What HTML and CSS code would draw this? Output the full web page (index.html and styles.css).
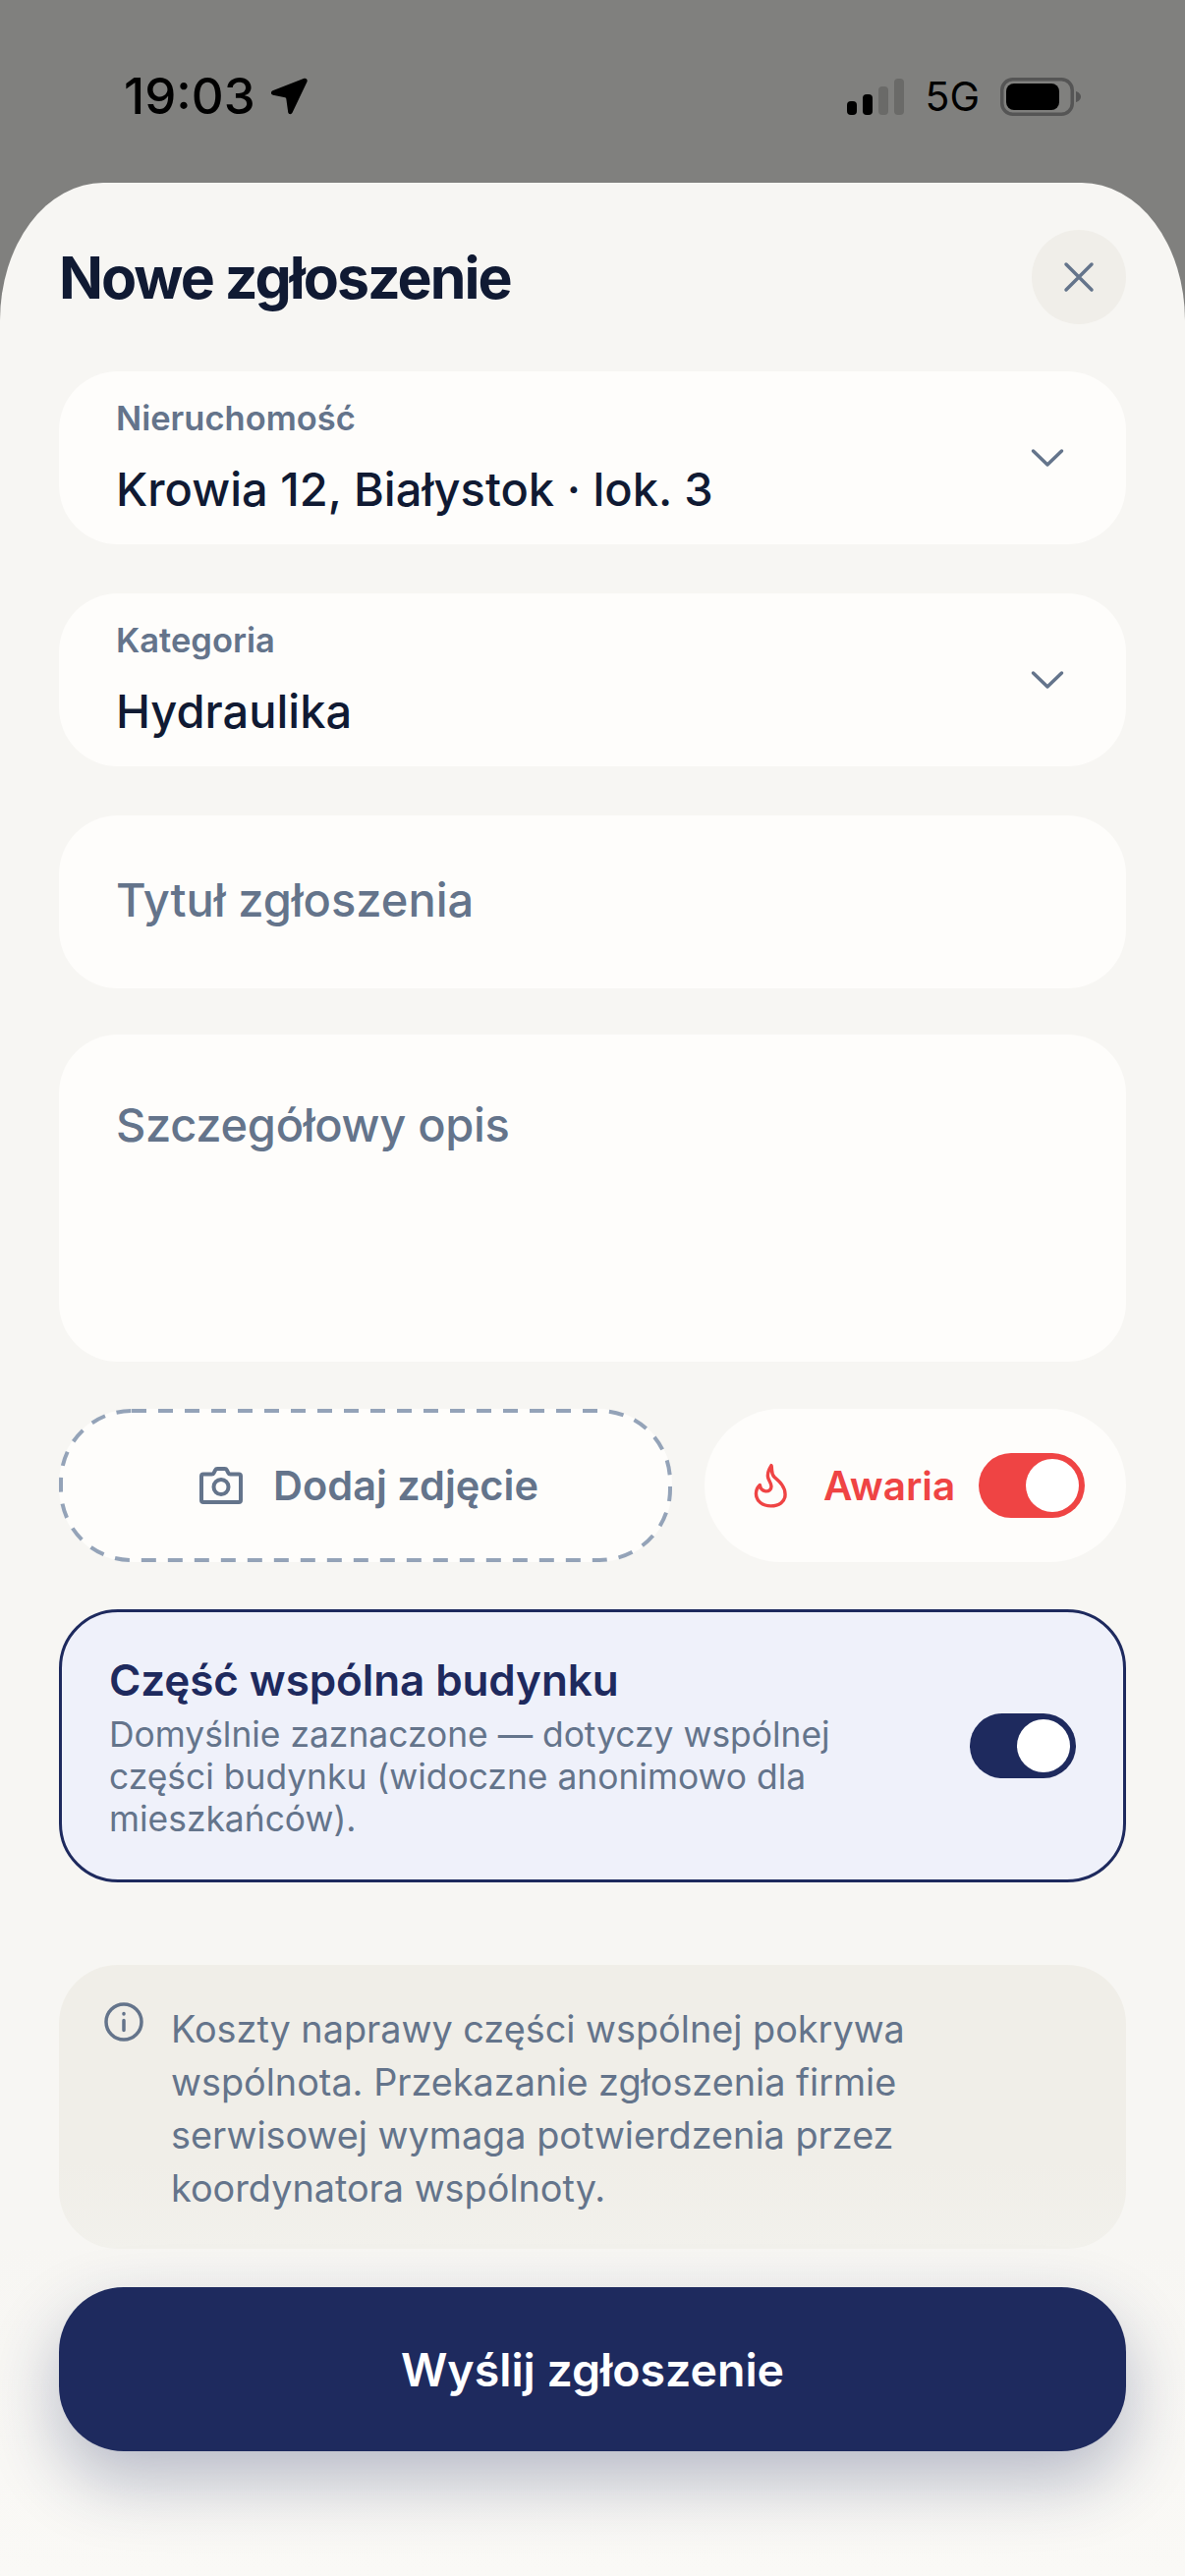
FILE: index.html
```html
<!DOCTYPE html>
<html lang="pl">
<head>
<meta charset="utf-8">
<title>Nowe zgłoszenie</title>
<link rel="stylesheet" href="styles.css">
</head>
<body>
<div class="screen">
  <div class="statusbar">
    <div class="status-left">
      <span class="time">19:03</span>
      <svg class="loc" viewBox="0 0 40 40"><path d="M35.500 1.800 3.500 14.300c-2.200.9-2 3.900.3 4.400l12.400 2.600c.6.1 1 .6 1.100 1.200l1.900 13.700c.3 2.300 3.400 2.700 4.300.6L38.600 5c.7-2-1.200-3.900-3.100-3.200z"/></svg>
    </div>
    <div class="status-right">
      <svg class="signal" viewBox="0 0 58 37"><rect x="0" y="23" width="10" height="14" rx="4"/><rect x="16" y="16" width="10" height="21" rx="4"/><rect class="dim" x="32" y="8" width="10" height="29" rx="4"/><rect class="dim" x="48" y="0" width="10" height="37" rx="4"/></svg>
      <span class="net">5G</span>
      <svg class="battery" viewBox="0 0 82 39"><rect class="batt-frame" x="1.750" y="1.750" width="71.500" height="35.500" rx="11"/><rect x="6" y="6" width="54" height="27" rx="8"/><path class="dim" d="M77 14c2.500.6 5 2.700 5 5.500s-2.500 4.900-5 5.500z"/></svg>
    </div>
  </div>

  <main class="sheet">
    <header class="sheet-head">
      <h1 class="title">Nowe zgłoszenie</h1>
      <button class="close" type="button" aria-label="Zamknij">
        <svg class="close-icon" viewBox="0 0 32 32"><path d="M3 3l26 26M29 3 3 29"/></svg>
      </button>
    </header>

    <div class="field field-select">
      <div class="field-body">
        <div class="field-label">Nieruchomość</div>
        <div class="field-value">Krowia 12, Białystok · lok. 3</div>
      </div>
      <svg class="chevron" viewBox="0 0 34 20"><path d="M2.500 3 17 17 31.500 3"/></svg>
    </div>

    <div class="field field-select">
      <div class="field-body">
        <div class="field-label">Kategoria</div>
        <div class="field-value">Hydraulika</div>
      </div>
      <svg class="chevron" viewBox="0 0 34 20"><path d="M2.500 3 17 17 31.500 3"/></svg>
    </div>

    <div class="field field-input">Tytuł zgłoszenia</div>
    <div class="field field-area">Szczegółowy opis</div>

    <div class="action-row">
      <div class="photo">
        <svg class="photo-outline" viewBox="0 0 624 156"><rect x="2" y="2" width="620" height="152" rx="72"/></svg>
        <svg class="camera" viewBox="0 0 44 38"><path d="M4 7.500h8.500c1 0 1.800-.5 2.200-1.400l1.400-2.800c.4-.8 1.200-1.300 2.100-1.300h7.600c.9 0 1.700.5 2.100 1.300l1.400 2.800c.4.900 1.200 1.400 2.200 1.400H40c1.100 0 2 .9 2 2V34c0 1.100-.9 2-2 2H4c-1.100 0-2-.9-2-2V9.500c0-1.100.9-2 2-2z"/><circle cx="22" cy="20.500" r="7.500"/></svg>
        <span class="photo-text">Dodaj zdjęcie</span>
      </div>
      <div class="alarm">
        <svg class="flame" viewBox="0 0 36 46"><path d="M18.500 2c1.500 5-1 8.500 3.500 12.500 5 4.500 11 9.500 11 18 0 7.500-6.500 12-15 12s-15.500-5-15.500-13c0-3.500 1.500-6.500 4-9 .5 3.500 2.500 6 6 6.500 3.500.5 6-2 6-5 0-3.500-2.500-5.500-3.500-9.500-.7-3.500 1-8.500 3.500-12.500z"/></svg>
        <span class="alarm-text">Awaria</span>
        <span class="toggle toggle-red"><span class="knob"></span></span>
      </div>
    </div>

    <section class="common">
      <div class="common-text">
        <div class="common-title">Część wspólna budynku</div>
        <p class="common-desc">Domyślnie zaznaczone — dotyczy wspólnej części budynku (widoczne anonimowo dla mieszkańców).</p>
      </div>
      <span class="toggle toggle-navy"><span class="knob"></span></span>
    </section>

    <aside class="note">
      <svg class="info" viewBox="0 0 40 40"><circle cx="20" cy="20" r="18"/><path d="M20 18.500v10M20 11.500v.6"/></svg>
      <p class="note-text">Koszty naprawy części wspólnej pokrywa wspólnota. Przekazanie zgłoszenia firmie serwisowej wymaga potwierdzenia przez koordynatora wspólnoty.</p>
    </aside>

    <button class="submit" type="button">Wyślij zgłoszenie</button>
  </main>
</div>
</body>
</html>
```

FILE: styles.css
```css
* { box-sizing: border-box; }
html, body { margin: 0; padding: 0; }
body {
  width: 1206px;
  height: 2622px;
  overflow: hidden;
  background: #80807e;
  font-family: Inter, "Liberation Sans", sans-serif;
}
.screen { height: 2622px; display: flex; flex-direction: column; }

.statusbar {
  height: 186px;
  flex: none;
  padding: 71px 106px 0 126px;
  display: flex;
  justify-content: space-between;
  align-items: flex-start;
  color: #000;
}
.status-left { display: flex; align-items: center; gap: 14px; height: 54px; }
.time { font-size: 51px; font-weight: 500; line-height: 54px; }
.loc { width: 40px; height: 40px; fill: #000; }
.status-right { display: flex; align-items: center; height: 54px; }
.signal { width: 58px; height: 37px; fill: #000; margin-right: 21px; }
.signal .dim { fill: #6a6a68; }
.net { font-size: 41px; font-weight: 400; line-height: 54px; margin-right: 21px; }
.battery { width: 82px; height: 39px; fill: #000; }
.batt-frame { fill: none; stroke: #555; stroke-width: 3.5; }
.battery .dim { fill: #555; }

.sheet {
  flex: 1;
  background: linear-gradient(#f7f6f3 0, #f7f6f3 2100px, #faf9f6 100%);
  border-radius: 105px 105px 0 0 / 140px 140px 0 0;
  padding: 48px 60px 0;
  display: flex;
  flex-direction: column;
  gap: 50px;
}
.sheet-head {
  height: 96px;
  margin-bottom: -2px;
  display: flex;
  align-items: center;
  justify-content: space-between;
}
.title {
  margin: 0;
  font-size: 59px;
  font-weight: 700;
  letter-spacing: -2px;
  color: #101a33;
}
.close {
  width: 96px;
  height: 96px;
  border: 0;
  padding: 0;
  border-radius: 50%;
  background: #f0eee9;
  display: flex;
  align-items: center;
  justify-content: center;
}
.close-icon { width: 32px; height: 32px; fill: none; stroke: #64748b; stroke-width: 3.5; stroke-linecap: round; }

.field {
  background: #fefdfb;
  border-radius: 60px;
  height: 176px;
  padding: 0 58px;
  flex: none;
}
.field-select { display: flex; align-items: center; justify-content: space-between; }
.field-label { font-size: 34.500px; font-weight: 600; color: #64748b; line-height: 40px; margin-bottom: 24px; }
.field-value { font-size: 47px; font-weight: 500; color: #101a33; line-height: 56px; }
.chevron { width: 34px; height: 20px; fill: none; stroke: #64748b; stroke-width: 3.500; stroke-linecap: round; stroke-linejoin: round; margin-right: 5px; }
.field-input { display: flex; align-items: center; padding-bottom: 6px; font-size: 47px; font-weight: 500; color: #64748b; }
.field-area { height: 333px; margin-top: -3px; padding-top: 64px; font-size: 47px; font-weight: 500; color: #64748b; line-height: 56px; letter-spacing: -0.3px; }

.action-row { display: flex; gap: 33px; height: 156px; flex: none; margin-top: -2px; }
.photo {
  position: relative;
  width: 624px;
  border-radius: 76px;
  background: #fefdfb;
  display: flex;
  align-items: center;
  justify-content: center;
  gap: 31px;
  padding-left: 7px;
}
.photo-outline { position: absolute; inset: 0; width: 624px; height: 156px; }
.photo-outline rect { fill: none; stroke: #94a3b8; stroke-width: 4; stroke-dasharray: 15 12; }
.camera { width: 44px; height: 38px; fill: none; stroke: #64748b; stroke-width: 4; stroke-linejoin: round; }
.photo-text { font-size: 41.500px; font-weight: 600; color: #64748b; }
.alarm {
  flex: 1;
  background: #fefdfb;
  border-radius: 78px;
  display: flex;
  align-items: center;
  padding: 0 42px 0 50px;
}
.flame { width: 35px; height: 46px; fill: none; stroke: #ef4444; stroke-width: 3.500; stroke-linejoin: round; }
.alarm-text { font-size: 40.500px; font-weight: 600; color: #ef4444; margin-left: 36px; }
.alarm .toggle { margin-left: auto; }

.toggle {
  width: 108px;
  height: 66px;
  border-radius: 33px;
  flex: none;
  display: flex;
  align-items: center;
  justify-content: flex-end;
  padding-right: 6px;
}
.toggle-red { background: #ef4444; }
.toggle-navy { background: #1e2a5e; }
.knob { width: 54px; height: 54px; border-radius: 50%; background: #fff; }

.common {
  height: 278px;
  flex: none;
  margin-top: -2px;
  border: 3px solid #1e2a5e;
  border-radius: 60px;
  background: #eff1fa;
  display: flex;
  align-items: center;
  justify-content: space-between;
  padding: 0 48px 0 48px;
}
.common-text { width: 800px; }
.common-title { font-size: 44px; font-weight: 600; color: #1e2a5e; line-height: 56px; margin-bottom: 6px; letter-spacing: -0.1px; }
.common-desc { margin: 0; font-size: 35.400px; font-weight: 400; color: #64748b; line-height: 43px; }

.note {
  margin-top: 34px;
  height: 289px;
  flex: none;
  background: linear-gradient(#f0eee8 0, #f0eee8 70%, #f2f1ec 100%);
  border-radius: 60px;
  padding: 38px 60px 0 46px;
  display: flex;
  align-items: flex-start;
  gap: 28px;
}
.info { width: 40px; height: 40px; flex: none; fill: none; stroke: #64748b; stroke-width: 3.500; stroke-linecap: round; }
.note-text { margin: 0; font-size: 37.800px; font-weight: 400; color: #64748b; line-height: 54px; }

.submit {
  margin-top: -11px;
  height: 167px;
  flex: none;
  border: 0;
  border-radius: 66px;
  background: #1e2a5e;
  color: #fff;
  font-family: inherit;
  font-size: 46.500px;
  font-weight: 600;
  box-shadow: 0 30px 70px rgba(30, 42, 94, 0.3);
}
```
